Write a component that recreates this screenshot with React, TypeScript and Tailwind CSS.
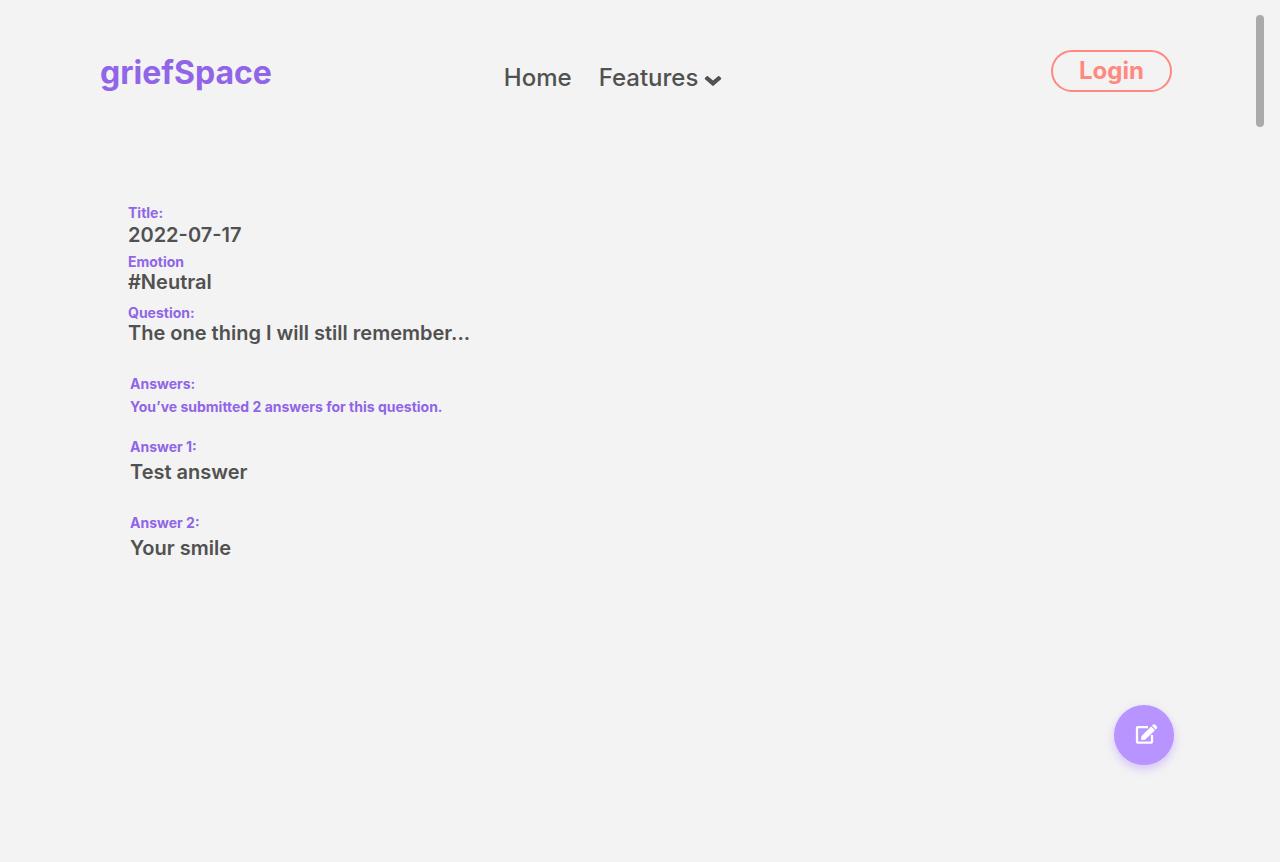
import type { ReactNode } from "react";

function Label({ children }: { children: ReactNode }) {
  return (
    <h2 className="text-[14px] leading-[18px] font-bold text-[#9065e7]">{children}</h2>
  );
}

function Value({ children }: { children: ReactNode }) {
  return <p className="text-[20px] leading-[22px] font-semibold">{children}</p>;
}

function ChevronIcon() {
  return (
    <svg width="18" height="12" viewBox="0 0 18 12" fill="none" aria-hidden="true">
      <path
        d="M.9 3.1 2.7 1.2c.4-.3.8-.3 1.2 0L9 5.6l5.1-4.4c.4-.3.8-.3 1.2 0l1.8 1.9c.3.4.3.8-.1 1.1L9.8 10.6c-.5.4-1.1.4-1.6 0L1 4.2c-.4-.3-.4-.7-.1-1.1z"
        fill="currentColor"
      />
    </svg>
  );
}

function EditIcon() {
  return (
    <svg width="24" height="22" viewBox="0 0 24 22" fill="none" aria-hidden="true">
      <path
        d="M14 4.2H3.8c-.6 0-.8.3-.8.8v13.8c0 .5.3.8.8.8h13.4c.5 0 .8-.3.8-.8V12"
        stroke="currentColor"
        strokeWidth="2.3"
      />
      <path
        d="M17.2 3.5 21 7.2l-9.4 9c-.4.4-.9.6-1.4.6l-2.4.2c-.4 0-.7-.3-.7-.7l.3-2.6c0-.5.2-.9.6-1.3zM18 2.700l1-1c.7-.7 1.500-.7 2.200 0l1.500 1.500c.7.7.7 1.500 0 2.200l-1 1z"
        fill="currentColor"
      />
    </svg>
  );
}

export default function App() {
  return (
    <div className="relative min-h-screen bg-[#f3f3f3] font-['Inter',sans-serif] text-[#515151]">
      <header className="flex items-start pt-[50px] pr-[108px] pl-[100px]">
        <a href="#" className="pt-0.5 text-[32px] leading-[42px] font-bold text-[#9065e7]">
          griefSpace
        </a>
        <nav className="ml-[232px] flex gap-[27px] pt-[13px] text-[24px] leading-[30px] font-medium">
          <a href="#home">Home</a>
          <button type="button" className="flex items-center gap-1.5">
            Features
            <span className="pt-1.5">
              <ChevronIcon />
            </span>
          </button>
        </nav>
        <button
          type="button"
          className="ml-auto h-[42px] w-[121px] rounded-full border-2 border-[#ff8880] text-[24px] leading-[38px] font-bold text-[#ff8880]"
        >
          Login
        </button>
      </header>

      <main className="flex flex-col gap-[31px] px-32 pt-[110px] pb-24">
        <div className="flex flex-col">
          <section className="flex flex-col gap-0.5">
            <Label>Title:</Label>
            <Value>2022-07-17</Value>
          </section>
          <section className="mt-[7px]">
            <Label>Emotion</Label>
            <Value>#Neutral</Value>
          </section>
          <section className="mt-[11px]">
            <Label>Question:</Label>
            <Value>The one thing I will still remember...</Value>
          </section>
        </div>
        <div className="flex flex-col gap-[22px] pl-0.5">
          <section className="flex flex-col gap-[5px]">
            <Label>Answers:</Label>
            <p className="text-[14px] leading-[18px] font-bold text-[#9065e7]">
              You’ve submitted 2 answers for this question.
            </p>
          </section>
          <div className="flex flex-col gap-[31px]">
            <section className="flex flex-col gap-[5px]">
              <Label>Answer 1:</Label>
              <Value>Test answer</Value>
            </section>
            <section className="flex flex-col gap-[5px]">
              <Label>Answer 2:</Label>
              <Value>Your smile</Value>
            </section>
          </div>
        </div>
      </main>

      <div className="absolute top-[15px] right-4 h-28 w-2 rounded-full bg-[#aaaaaa]" />

      <button
        type="button"
        aria-label="Edit entry"
        className="fixed right-[106px] bottom-[97px] flex size-[60px] items-center justify-center rounded-full bg-[#b794ff] pb-0.5 pl-1 text-white shadow-[0_4px_8px_rgba(183,148,255,0.5)]"
      >
        <EditIcon />
      </button>
    </div>
  );
}
